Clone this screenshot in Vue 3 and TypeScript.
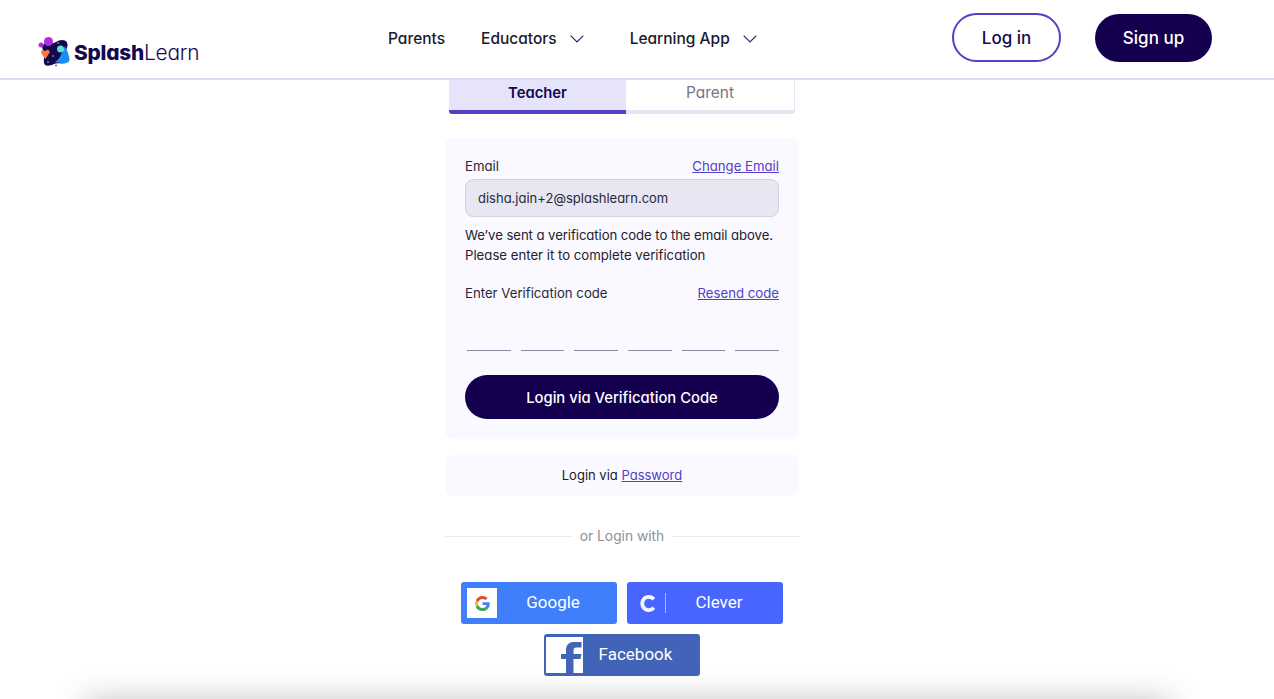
<script setup lang="ts">
const navItems = [
  { label: 'Parents', caret: false },
  { label: 'Educators', caret: true },
  { label: 'Learning App', caret: true }
]
const codeSlots = [1, 2, 3, 4, 5, 6]
</script>

<template>
  <div class="page">
    <header class="topbar">
      <a class="logo">
        <svg class="logo-mark" width="32" height="31" viewBox="0 0 32 31">
          <path d="M5 9 C8 5 14 9 18 6 C22 3 29 3 29.500 8 C30 12 27 14 28 18 C31 20 32 24 29 26 C25 29 20 26 16 28 C12 30 7 31 6 27 C5 22 8 20 6 16 C5 13 3 12 5 9Z" fill="#14084f"/>
          <path d="M27 10 C29 14 31 19 31.500 23 C32 27 27 28 23 27 C20 26 18 27 17 26 C21 24 24 17 27 10Z" fill="#1c8ff2"/>
          <circle cx="10.500" cy="5.500" r="4.500" fill="#b52ae0"/>
          <circle cx="3" cy="9" r="2.500" fill="#b52ae0"/>
          <path d="M3 14 L7 15 L10 13.500 L12 16 L7.500 23 L3.500 18Z" fill="#f47b3c"/>
          <circle cx="22.500" cy="13" r="3.500" fill="#5fe0d0"/>
          <circle cx="18" cy="29.500" r="1.100" fill="#1c8ff2"/>
          <circle cx="15" cy="20" r="0.700" fill="#fff"/>
          <circle cx="20" cy="7" r="0.700" fill="#fff"/>
          <circle cx="10" cy="26" r="0.700" fill="#fff"/>
        </svg>
        <span class="logo-text"><b>Splash</b>Learn</span>
      </a>
      <nav class="nav">
        <a v-for="item in navItems" :key="item.label" class="nav-link" :class="{ 'has-caret': item.caret }">
          {{ item.label }}
          <svg v-if="item.caret" width="14" height="8" viewBox="0 0 14 8">
            <path d="M0.700 0.700 L7 7 L13.300 0.700" fill="none" stroke="#2a1f62" stroke-width="1.100"/>
          </svg>
        </a>
      </nav>
      <div class="auth">
        <button class="btn-login">Log in</button>
        <button class="btn-signup">Sign up</button>
      </div>
    </header>

    <main class="column">
      <div class="tabs">
        <div class="tab active">Teacher</div>
        <div class="tab">Parent</div>
      </div>

      <section class="card">
        <div class="row">
          <label>Email</label>
          <a class="link">Change Email</a>
        </div>
        <div class="email-box">disha.jain+2@splashlearn.com</div>
        <p class="note"><span class="note-first">We’ve sent a verification code to the email above.</span><br>Please enter it to complete verification</p>
        <div class="row code-row">
          <label>Enter Verification code</label>
          <a class="link">Resend code</a>
        </div>
        <div class="slots">
          <span v-for="n in codeSlots" :key="n" class="slot"></span>
        </div>
        <button class="btn-verify">Login via Verification Code</button>
      </section>

      <div class="alt-login">Login via <a class="link">Password</a></div>

      <div class="divider"><span>or Login with</span></div>

      <div class="socials">
        <a class="social google">
          <span class="icon-box">
            <svg width="15" height="15" viewBox="0 0 48 48">
              <path fill="#EA4335" d="M24 9.500c3.500 0 6.700 1.200 9.200 3.600l6.900-6.900C35.900 2.400 30.500 0 24 0 14.600 0 6.500 5.400 2.600 13.200l8 6.200C12.400 13.600 17.700 9.500 24 9.500z"/>
              <path fill="#4285F4" d="M47 24.500c0-1.600-.1-3.100-.4-4.500H24v9h12.900c-.6 3-2.200 5.500-4.700 7.200l7.700 6c4.500-4.200 7.100-10.300 7.100-17.700z"/>
              <path fill="#FBBC05" d="M10.500 28.600c-.5-1.400-.8-3-.8-4.600s.3-3.200.8-4.600l-8-6.200C.9 16.500 0 20.100 0 24s.9 7.500 2.600 10.800l7.900-6.200z"/>
              <path fill="#34A853" d="M24 48c6.500 0 11.900-2.100 15.900-5.800l-7.700-6c-2.100 1.400-4.900 2.300-8.200 2.300-6.300 0-11.600-4.100-13.500-9.900l-8 6.200C6.500 42.600 14.600 48 24 48z"/>
            </svg>
          </span>
          <span class="social-label">Google</span>
        </a>
        <a class="social clever">
          <span class="clever-mark">
            <svg width="17" height="19" viewBox="0 0 17 19">
              <path d="M14.800 5.200 A6.600 6.600 0 1 0 14.800 13.800" fill="none" stroke="#f4f5ff" stroke-width="3.800"/>
            </svg>
          </span>
          <span class="social-label">Clever</span>
        </a>
        <a class="social facebook">
          <span class="icon-box">
            <svg width="21" height="31" viewBox="0 0 21 31">
              <path d="M5 31 V17 H0 V12 H5 V8 C5 2.500 8.500 0 13 0 H20.500 V5.500 H15.500 C13 5.500 12.500 6.500 12.500 9 V12 H20.500 L19.500 17 H12.500 V31Z" fill="#4163b8"/>
            </svg>
          </span>
          <span class="social-label">Facebook</span>
        </a>
      </div>

      <div class="footer-edge"></div>
    </main>
  </div>
</template>

<style>
html, body {
  overflow: hidden;
  background: #fff;
}
</style>

<style scoped>
.page {
  height: 699px;
  overflow: hidden;
  font-family: "Inter", "Noto Sans", sans-serif;
  font-feature-settings: "cv11" 1;
  color: #1c1a2e;
}

.topbar {
  height: 78px;
  box-sizing: content-box;
  border-bottom: 2px solid #dddbef;
  display: flex;
  align-items: flex-start;
  padding-left: 38px;
}

.logo {
  display: flex;
  align-items: center;
  width: 350px;
  margin-top: 36px;
  height: 31px;
}

.logo-text {
  margin-left: 4px;
  margin-top: 2px;
  font-size: 20.800px;
  font-weight: 300;
  color: #14084f;
  letter-spacing: -0.2px;
}

.logo-text b {
  font-weight: 800;
}

.nav {
  display: flex;
  margin-top: 29px;
  font-size: 15.500px;
  font-weight: 500;
  color: #1c1a2e;
}

.nav-link {
  display: flex;
  align-items: center;
  gap: 13px;
  height: 19px;
  margin-right: 36px;
  white-space: nowrap;
}

.nav-link.has-caret {
  margin-right: 46px;
}

.auth {
  position: absolute;
  top: 13px;
  right: 62px;
  display: flex;
  align-items: center;
  gap: 34px;
}

.btn-login,
.btn-signup,
.btn-verify {
  font-family: inherit;
  font-feature-settings: inherit;
  border-radius: 999px;
  cursor: pointer;
}

.btn-login {
  width: 109px;
  height: 49px;
  border: 2px solid #5340c5;
  background: #fff;
  color: #14084f;
  font-size: 17px;
  font-weight: 500;
}

.btn-signup {
  width: 117px;
  height: 48px;
  border: 0;
  background: #14004f;
  color: #fff;
  font-size: 17px;
  font-weight: 500;
}

.column {
  width: 354px;
  margin-left: 445px;
}

.tabs {
  display: flex;
  margin: 0 4px 24px;
  height: 34px;
  font-size: 15.500px;
}

.tab {
  flex: 1;
  display: flex;
  align-items: center;
  justify-content: center;
  padding-bottom: 6px;
  color: #77757f;
  border-bottom: 4px solid #e6e4f3;
  border-right: 1px solid #e6e4f3;
  box-sizing: border-box;
  border-radius: 0 0 3px 0;
}

.tab.active {
  flex: 0 0 177px;
  padding-bottom: 5px;
  font-size: 14.800px;
  background: #e5e4fa;
  color: #14084f;
  font-weight: 600;
  border-bottom-color: #5340c5;
  border-right: 0;
  border-radius: 0 0 0 3px;
}

.card {
  background: #f9f9ff;
  border-radius: 8px;
  padding: 20px;
  height: 301px;
  box-sizing: border-box;
  font-size: 13.200px;
}

.row {
  display: flex;
  justify-content: space-between;
  align-items: center;
  height: 17px;
  margin-top: -1px;
  color: #2a2838;
}

.link {
  color: #5340c5;
  text-decoration: underline;
}

.email-box {
  margin-top: 5px;
  height: 38px;
  box-sizing: border-box;
  border: 1px solid #d3d1e3;
  border-radius: 8px;
  background: #e7e6f2;
  padding: 0 12px;
  font-size: 13px;
  line-height: 36px;
  color: #2a2838;
}

.note {
  margin: 8px 0 0;
  line-height: 20px;
  color: #24222f;
  white-space: nowrap;
}

.note-first {
  letter-spacing: -0.08px;
}

.code-row {
  margin-top: 19px;
}

.slots {
  display: flex;
  gap: 10px;
  margin: 49px 0 0 2px;
}

.slot {
  flex: 1;
  height: 1px;
  background: #8d8a9f;
}

.btn-verify {
  display: block;
  width: 100%;
  height: 44px;
  margin-top: 24px;
  padding-top: 2px;
  border: 0;
  background: #14004f;
  color: #fff;
  font-size: 14.800px;
  font-weight: 500;
}

.alt-login {
  margin-top: 16px;
  height: 41px;
  line-height: 40px;
  background: #f9f9ff;
  border-radius: 8px;
  text-align: center;
  font-size: 13px;
  color: #1c1a2e;
}

.divider {
  display: flex;
  align-items: center;
  gap: 8px;
  margin-top: 30px;
  height: 20px;
  font-size: 13.800px;
  color: #8f8e96;
}

.divider::before,
.divider::after {
  content: "";
  flex: 1;
  height: 1px;
  background: #eaeaee;
}

.socials {
  display: flex;
  flex-wrap: wrap;
  justify-content: center;
  gap: 10px;
  margin-top: 36px;
}

.social {
  width: 156px;
  height: 42px;
  border-radius: 3px;
  display: flex;
  align-items: center;
  box-sizing: border-box;
  color: #fff;
  font-family: "Roboto", sans-serif;
  font-size: 17px;
}

.social-label {
  flex: 1;
  text-align: center;
  padding-bottom: 2px;
}

.icon-box {
  background: #fff;
  display: flex;
  align-items: center;
  justify-content: center;
  overflow: hidden;
}

.google {
  background: #3f7ffb;
  padding: 0 8px 0 6px;
}

.google .icon-box {
  width: 30px;
  height: 30px;
}

.clever {
  background: #4866ff;
  padding: 0 11px 0 12px;
}

.clever-mark {
  display: flex;
  align-items: center;
  width: 26px;
  height: 20px;
  border-right: 1px solid #a8b6ff;
}

.facebook {
  background: #4163b8;
  padding: 0 12px 0 2px;
}

.facebook .icon-box {
  width: 37px;
  height: 36px;
  align-items: flex-end;
  justify-content: flex-end;
  padding-right: 1px;
  box-sizing: border-box;
}

.footer-edge {
  width: 1085px;
  height: 200px;
  margin: 23px 0 0 -360px;
  background: #fff;
  box-shadow: 0 0 30px rgba(0, 0, 0, 0.22);
}
</style>
